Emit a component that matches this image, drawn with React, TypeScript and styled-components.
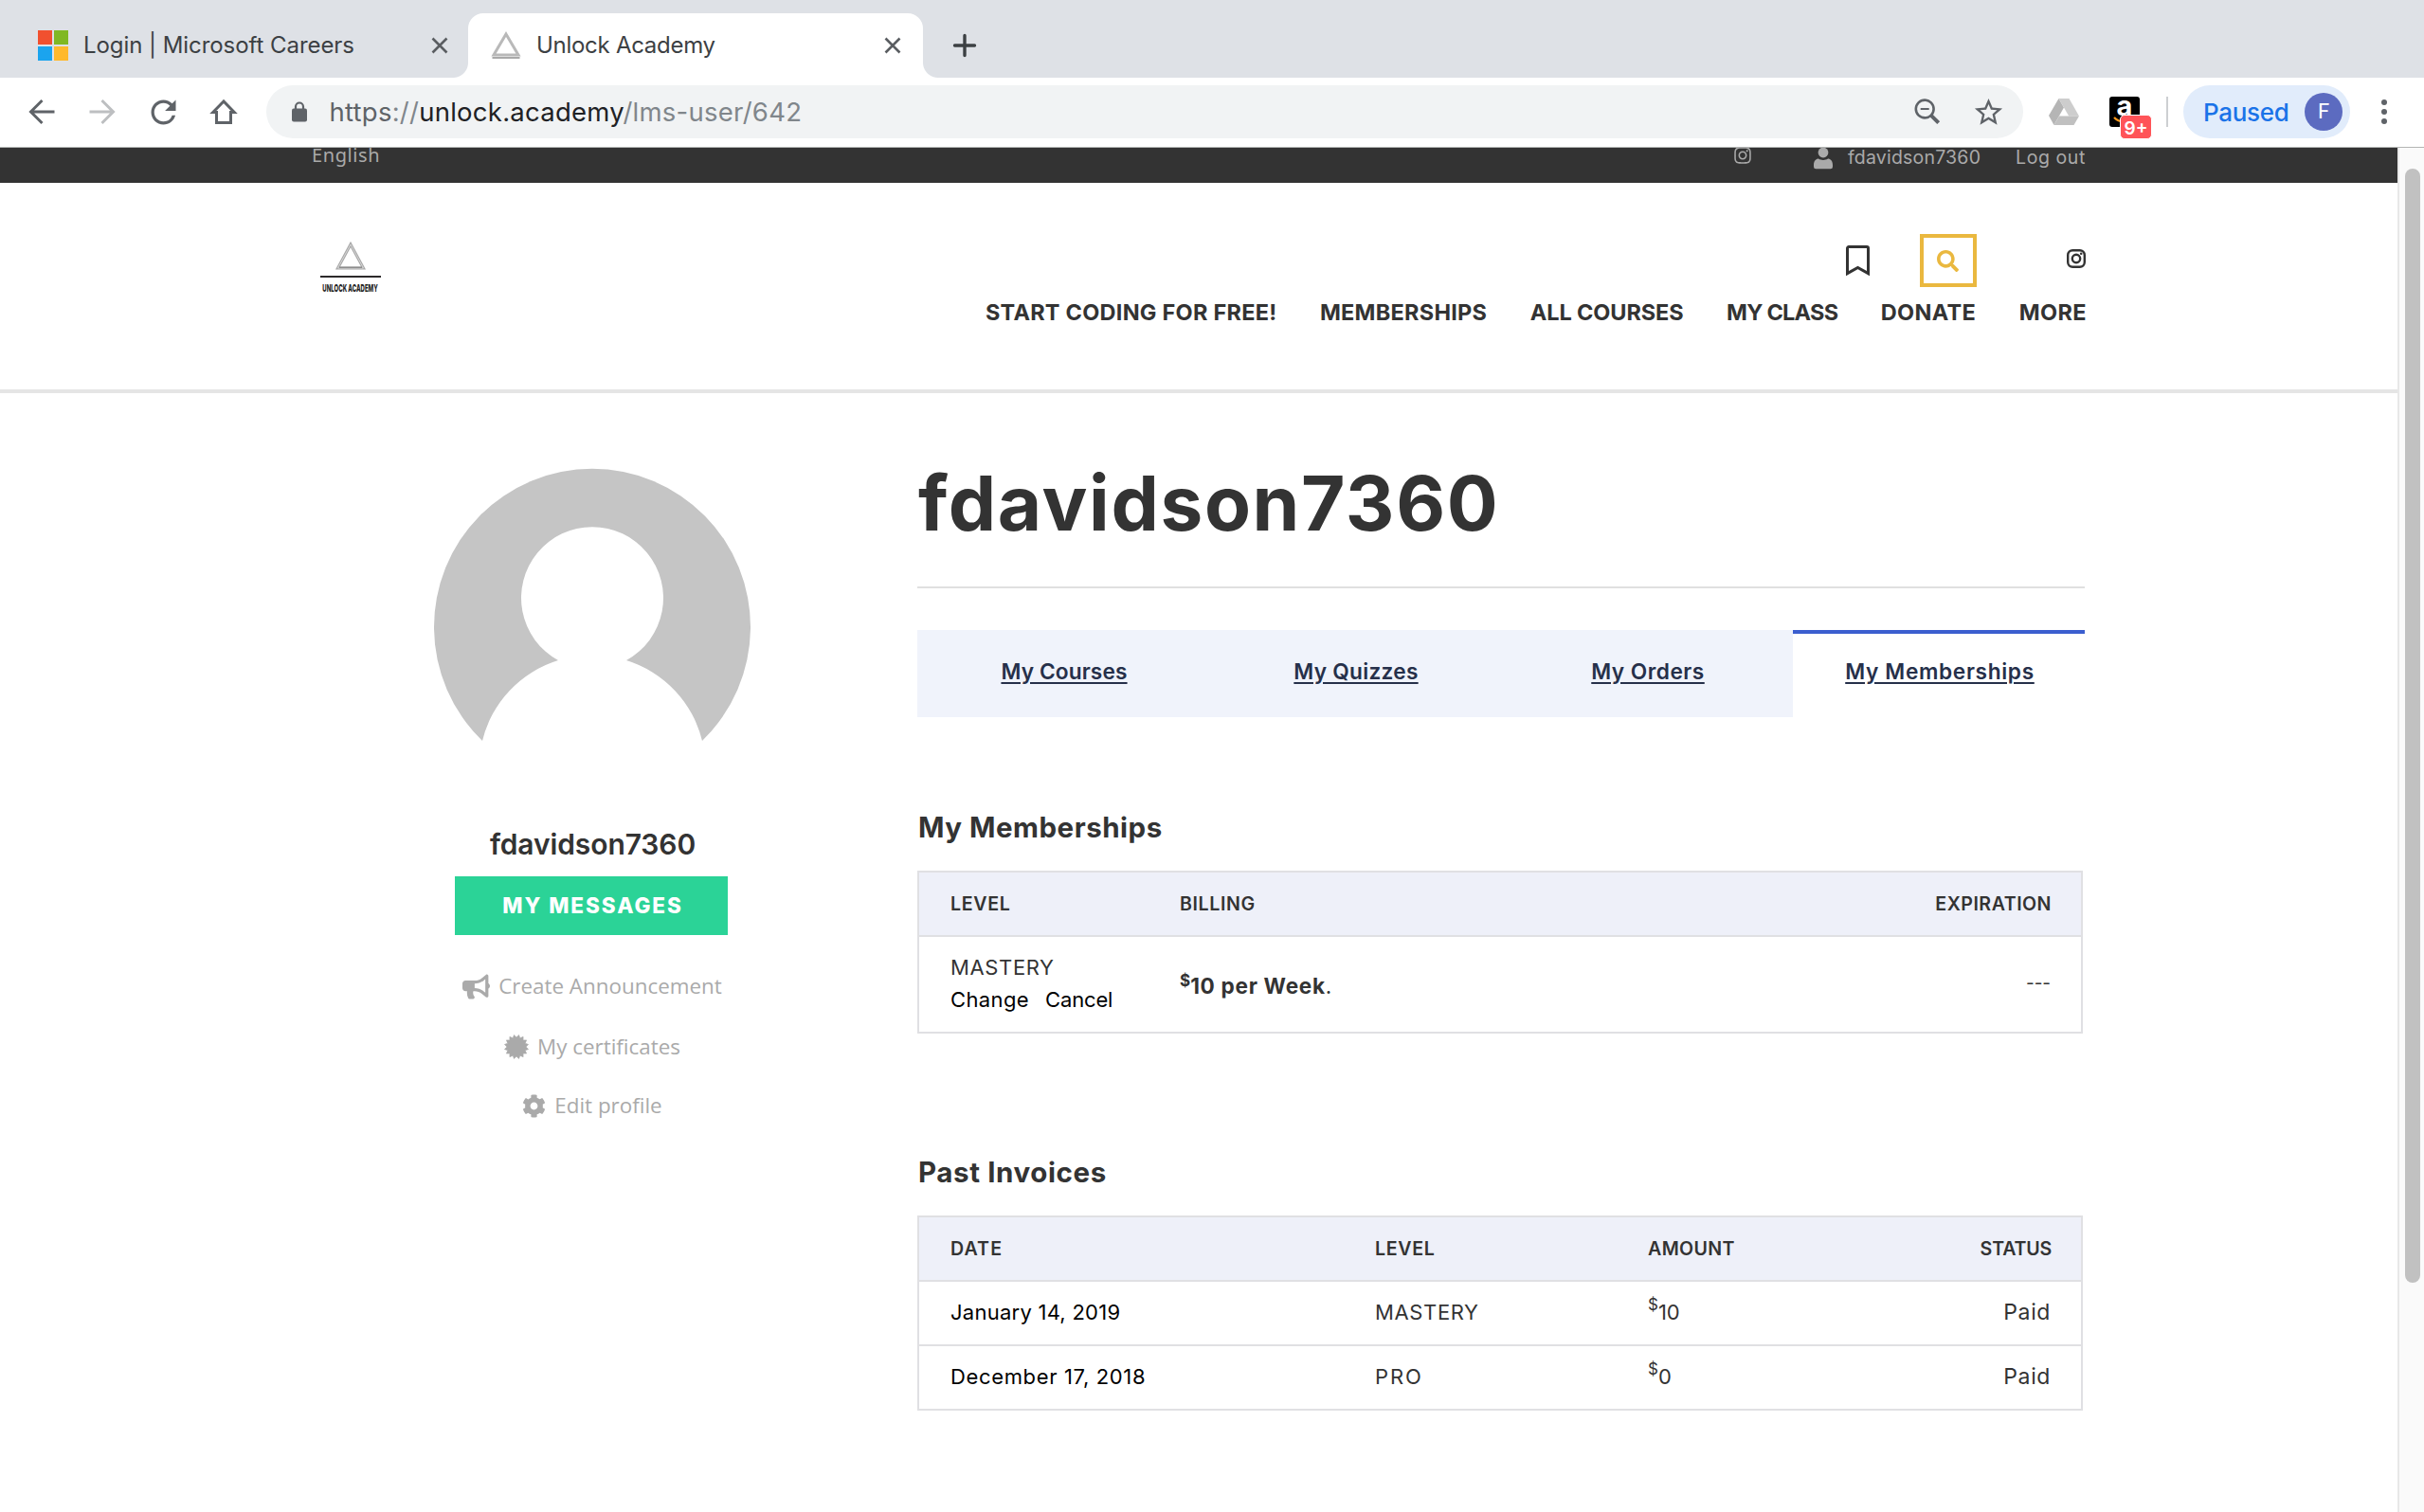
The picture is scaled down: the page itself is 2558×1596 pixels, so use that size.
import React from 'react';
import styled, { createGlobalStyle, css } from 'styled-components';
import { FaBullhorn, FaCog, FaInstagram, FaSearch } from 'react-icons/fa';
import { MdRefresh, MdStarBorder } from 'react-icons/md';

const GlobalStyle = createGlobalStyle`
  * { box-sizing: border-box; }
  html, body { margin: 0; padding: 0; background: #fff; overflow: hidden; }
  body { font-family: Inter, 'Liberation Sans', sans-serif; color: #333; }
  svg { display: block; flex: none; overflow: visible; }
`;

const Window = styled.div`
  width: 2558px;
  height: 1596px;
  display: flex;
  flex-direction: column;
  overflow: hidden;
`;

/* Browser tab strip */

const TabStrip = styled.div`
  height: 82px;
  padding-top: 14px;
  display: flex;
  background: #dee1e6;
`;

const flare = css`
  content: '';
  position: absolute;
  bottom: 0;
  width: 16px;
  height: 16px;
`;

const BrowserTab = styled.div<{ $active?: boolean }>`
  position: relative;
  width: ${(p) => (p.$active ? 480 : 494)}px;
  padding: ${(p) => (p.$active ? '0 23px 0 25px' : '0 21px 0 40px')};
  display: flex;
  align-items: center;
  ${(p) =>
    p.$active &&
    css`
      background: #fff;
      border-radius: 16px 16px 0 0;
      &::before {
        ${flare}
        left: -16px;
        background: radial-gradient(circle at 0 0, #dee1e6 15.5px, #fff 16.5px);
      }
      &::after {
        ${flare}
        right: -16px;
        background: radial-gradient(circle at 100% 0, #dee1e6 15.5px, #fff 16.5px);
      }
    `}
`;

const TabTitle = styled.span<{ $gap: number; $ls: number }>`
  flex: 1;
  margin-left: ${(p) => p.$gap}px;
  padding-bottom: 2px;
  font-size: 24px;
  letter-spacing: ${(p) => p.$ls}px;
  color: #3c4043;
  white-space: nowrap;
`;

const WindowsLogo = styled.div`
  display: grid;
  grid-template-columns: 15px 15px;
  grid-template-rows: 15px 15px;
  gap: 2px;
`;

const LogoTile = styled.div<{ $color: string }>`
  background: ${(p) => p.$color};
`;

const NewTab = styled.div`
  margin-left: 32px;
  display: flex;
  align-items: center;
`;

/* Browser toolbar */

const Toolbar = styled.div`
  height: 74px;
  padding: 0 0 1px 28px;
  display: flex;
  align-items: center;
  background: #fff;
  border-bottom: 1px solid #b3b5b4;
`;

const ToolIcon = styled.div<{ $gap?: number }>`
  width: 32px;
  height: 32px;
  margin-left: ${(p) => p.$gap ?? 0}px;
  display: flex;
  align-items: center;
  justify-content: center;
  flex: none;
  color: #5f6368;
`;

const AddressBar = styled.div`
  width: 1854px;
  height: 56px;
  margin-left: 29px;
  padding: 0 21px 0 27px;
  display: flex;
  align-items: center;
  border-radius: 28px;
  background: #f1f3f4;
`;

const Url = styled.div`
  flex: 1;
  margin-left: 23.5px;
  font-size: 27.5px;
  letter-spacing: 0.25px;
  color: #80868b;
`;

const UrlScheme = styled.span`
  color: #5f6368;
`;

const UrlHost = styled.span`
  color: #202124;
`;

const AmazonButton = styled.div`
  position: relative;
  width: 32px;
  height: 32px;
  margin-left: 32px;
  border-radius: 3px;
  background: #000;
  color: #fff;
  font-size: 29px;
  font-weight: 700;
  line-height: 20px;
  text-align: center;
`;

const AmazonSmile = styled.svg`
  position: absolute;
  left: 4px;
  top: 21px;
`;

const CountBadge = styled.span`
  position: absolute;
  left: 11px;
  top: 19px;
  width: 34px;
  height: 26px;
  border: 1px solid #fff;
  border-radius: 5px;
  background: #ff5458;
  font-size: 19px;
  font-weight: 600;
  line-height: 27px;
  color: #fff;
`;

const ToolDivider = styled.div`
  width: 2px;
  height: 32px;
  margin-left: 28px;
  background: #cdcfd2;
`;

const ProfilePill = styled.div`
  width: 176px;
  height: 56px;
  margin-left: 16px;
  padding: 0 8px 0 21px;
  display: flex;
  align-items: center;
  justify-content: space-between;
  border-radius: 28px;
  background: #e1ecfb;
  font: 500 26px Inter, sans-serif;
  letter-spacing: -0.3px;
  color: #1a73e8;
`;

const ProfileBadge = styled.div`
  width: 40px;
  height: 40px;
  border-radius: 50%;
  background: #5c6bc0;
  color: #fff;
  font: 400 22px/40px Roboto, sans-serif;
  text-align: center;
`;

/* Page frame */

const Viewport = styled.div`
  flex: 1;
  display: flex;
  min-height: 0;
`;

const Page = styled.div`
  width: 2530px;
  background: #fff;
`;

const ScrollTrack = styled.div`
  width: 28px;
  padding: 22px 4px 0 6px;
  background: #fafafa;
  border-left: 2px solid #e8e8e8;
`;

const ScrollThumb = styled.div`
  width: 16px;
  height: 1176px;
  border-radius: 8px;
  background: #c1c1c1;
`;

/* Site top bar */

const TopBar = styled.div`
  height: 37px;
  padding: 0 330px 0 329px;
  display: flex;
  align-items: flex-start;
  background: #333;
  color: #aaa;
`;

const Language = styled.span`
  margin-right: auto;
  font: 400 20px/16px 'Noto Sans', sans-serif;
  letter-spacing: 0.6px;
`;

const TopBarIcon = styled.span<{ $shift: number; $after: number }>`
  margin: ${(p) => p.$shift}px ${(p) => p.$after}px 0 0;
`;

const TopBarLink = styled.span<{ $width: number; $ls: number }>`
  width: ${(p) => p.$width}px;
  font-size: 19.5px;
  line-height: 21px;
  letter-spacing: ${(p) => p.$ls}px;
  white-space: nowrap;
`;

/* Site header */

const Header = styled.header`
  height: 222px;
  padding: 0 328px 0 338px;
  display: flex;
  justify-content: space-between;
  border-bottom: 4px solid #e5e5e5;
`;

const Brand = styled.div`
  width: 64px;
  padding-top: 62px;
  display: flex;
  flex-direction: column;
  align-items: center;
`;

const BrandRule = styled.div`
  width: 64px;
  height: 2px;
  margin-top: 6px;
  background: #2d2a2b;
`;

const BrandName = styled.div`
  margin-top: 4px;
  font-size: 11px;
  font-weight: 800;
  line-height: 14px;
  color: #222;
  white-space: nowrap;
  transform: scaleX(0.545);
`;

const HeaderSide = styled.div`
  padding-top: 54px;
  display: flex;
  flex-direction: column;
  align-items: flex-end;
`;

const HeaderTools = styled.div`
  padding-right: 1px;
  display: flex;
  align-items: center;
`;

const SearchBox = styled.div`
  width: 60px;
  height: 56px;
  margin: 0 95px 0 53px;
  padding-right: 1px;
  display: flex;
  align-items: center;
  justify-content: center;
  border: 4px solid #eab83f;
  color: #eab83f;
`;

const HeaderSocial = styled.div`
  margin-bottom: 5px;
`;

const Nav = styled.nav`
  margin-top: 14px;
  display: flex;
  gap: 45.5px;
`;

const NavLink = styled.span<{ $ls: number }>`
  font-size: 23.5px;
  font-weight: 700;
  line-height: 25px;
  letter-spacing: ${(p) => p.$ls}px;
  white-space: nowrap;
`;

/* Profile body */

const Body = styled.main`
  padding: 0 330px;
  display: grid;
  grid-template-columns: 590px 1232px;
  column-gap: 48px;
`;

const Sidebar = styled.aside`
  padding-top: 80px;
  display: flex;
  flex-direction: column;
  align-items: center;
`;

const UserName = styled.div`
  margin: 44px 0 0 1px;
  font-size: 30px;
  font-weight: 600;
  line-height: 36px;
  letter-spacing: -0.1px;
`;

const MessagesButton = styled.div`
  width: 288px;
  height: 62px;
  margin: 16px 2px 6px 0;
  padding: 0 0 2px 3px;
  display: flex;
  align-items: center;
  justify-content: center;
  background: #2bd397;
  color: #fff;
  font-size: 22.5px;
  font-weight: 800;
  letter-spacing: 1.95px;
`;

const ProfileLink = styled.div<{ $above: number }>`
  margin-top: ${(p) => p.$above}px;
  display: flex;
  align-items: center;
  gap: 9px;
  color: #aaa;
  font: 400 22.4px/34px 'Open Sans', sans-serif;
`;

const Content = styled.section`
  display: flex;
  flex-direction: column;
`;

const Title = styled.h1`
  margin: 66px 0 38px 1px;
  font-size: 80px;
  font-weight: 700;
  line-height: 100px;
  letter-spacing: 1.63px;
`;

const Rule = styled.div`
  height: 2px;
  background: #e0e0e0;
`;

const Tabs = styled.div`
  height: 92px;
  margin: 44px 0 98px;
  display: grid;
  grid-template-columns: repeat(4, 1fr);
`;

const Tab = styled.div<{ $active?: boolean; $ls: number }>`
  padding: 25px 0 0 2px;
  border-top: 4px solid ${(p) => (p.$active ? '#3b5ecf' : '#f0f3fb')};
  background: ${(p) => (p.$active ? '#fff' : '#f0f3fb')};
  color: #26304a;
  font-size: 22.7px;
  font-weight: 600;
  line-height: 29px;
  letter-spacing: ${(p) => p.$ls}px;
  text-align: center;
  text-decoration: underline;
  text-decoration-thickness: 2px;
  text-underline-offset: 3px;
`;

const SectionTitle = styled.h3<{ $ls: number }>`
  margin: 0 0 28px 1px;
  font-size: 29.5px;
  font-weight: 700;
  line-height: 36px;
  letter-spacing: ${(p) => p.$ls}px;
`;

const Table = styled.div<{ $columns: string }>`
  width: 1230px;
  margin-bottom: 128px;
  display: grid;
  border: 2px solid #e0e0e3;

  & > div {
    grid-template-columns: ${(p) => p.$columns};
  }
`;

const HeadRow = styled.div`
  height: 66px;
  padding: 0 31px 0 33px;
  display: grid;
  align-items: center;
  background: #eef0f9;
`;

const Row = styled.div<{ $height: number }>`
  height: ${(p) => p.$height + 2}px;
  padding: 0 32px 2px 33px;
  display: grid;
  align-items: center;
  border-top: 2px solid #e0e0e3;
  font-size: 22px;
  line-height: 34px;
`;

const HeadCell = styled.div<{ $ls: number; $right?: boolean }>`
  font-size: 19.6px;
  font-weight: 600;
  letter-spacing: ${(p) => p.$ls}px;
  text-align: ${(p) => (p.$right ? 'right' : 'left')};
`;

const Cell = styled.div<{ $ls?: number; $right?: boolean }>`
  letter-spacing: ${(p) => p.$ls ?? 0}px;
  text-align: ${(p) => (p.$right ? 'right' : 'left')};
`;

const DarkCell = styled(Cell)`
  color: #000;
`;

const Actions = styled.div`
  display: flex;
  gap: 17px;
  color: #000;
`;

const Action = styled.span<{ $ls: number }>`
  letter-spacing: ${(p) => p.$ls}px;
`;

const Price = styled(Cell)`
  padding-top: 5px;
  font-size: 22.6px;
  letter-spacing: 0.7px;
`;

const NoExpiry = styled(Cell)`
  font-size: 19px;
  letter-spacing: -0.1px;
`;

const Status = styled(Cell)`
  font-size: 23px;
  letter-spacing: 0.6px;
  text-align: right;
`;

const Dollar = styled.sup<{ $raise: number }>`
  font-size: 17px;
  line-height: 0;
  letter-spacing: 0;
  vertical-align: ${(p) => p.$raise}px;
`;

const CloseIcon = () => (
  <svg width="18" height="18" viewBox="0 0 18 18" stroke="#5a5d61" strokeWidth="2.6">
    <path d="M1.5 1.5L16.5 16.5M16.5 1.5L1.5 16.5" />
  </svg>
);

const toolStroke = { width: 32, height: 32, viewBox: '0 0 32 32', fill: 'none', strokeWidth: 3 };

/* Zigzag outline of the certificate seal: 16 points around a 26px circle */
const burst = Array.from({ length: 32 }, (_, i) => {
  const r = i % 2 ? 12.8 : 10;
  const a = (i * Math.PI) / 16;
  return `${(13 + r * Math.sin(a)).toFixed(2)},${(13 - r * Math.cos(a)).toFixed(2)}`;
}).join(' ');

const navItems: [string, number][] = [
  ['START CODING FOR FREE!', 0.25],
  ['MEMBERSHIPS', 0.26],
  ['ALL COURSES', -0.1],
  ['MY CLASS', -0.75],
  ['DONATE', 0.33],
  ['MORE', 0.4],
];

const tabs: [string, number][] = [
  ['My Courses', 0.12],
  ['My Quizzes', 0.26],
  ['My Orders', 0.48],
  ['My Memberships', 0.65],
];

const invoices = [
  { date: 'January 14, 2019', dateLs: 0.25, level: 'MASTERY', levelLs: 0.63, amount: '10' },
  { date: 'December 17, 2018', dateLs: 0.65, level: 'PRO', levelLs: 1.9, amount: '0' },
];

function BrowserChrome() {
  return (
    <>
      <TabStrip>
        <BrowserTab>
          <WindowsLogo>
            <LogoTile $color="#f1502f" />
            <LogoTile $color="#80b823" />
            <LogoTile $color="#1ba4ee" />
            <LogoTile $color="#ffb92c" />
          </WindowsLogo>
          <TabTitle $gap={16} $ls={-0.06}>Login | Microsoft Careers</TabTitle>
          <CloseIcon />
        </BrowserTab>
        <BrowserTab $active>
          <svg width="30" height="28" viewBox="0 0 30 28" fill="none">
            <path d="M15 2L28 24H2Z" stroke="#b9b9b9" strokeWidth="3" />
            <path d="M0.5 27H29.5" stroke="#a9a9a9" strokeWidth="2" />
          </svg>
          <TabTitle $gap={17} $ls={-0.28}>Unlock Academy</TabTitle>
          <CloseIcon />
        </BrowserTab>
        <NewTab>
          <svg width="24" height="24" viewBox="0 0 24 24" stroke="#3c4043" strokeWidth="3.4" strokeLinecap="round">
            <path d="M12 1.5V22.5M1.5 12H22.5" />
          </svg>
        </NewTab>
      </TabStrip>
      <Toolbar>
        <ToolIcon>
          <svg {...toolStroke} stroke="#5f6368">
            <path d="M16.5 4L4.5 16L16.5 28M5 16H29.5" />
          </svg>
        </ToolIcon>
        <ToolIcon $gap={32}>
          <svg {...toolStroke} stroke="#bdbfc1">
            <path d="M15.5 4L27.5 16L15.5 28M27 16H2.5" />
          </svg>
        </ToolIcon>
        <ToolIcon $gap={32}>
          <MdRefresh size={39} />
        </ToolIcon>
        <ToolIcon $gap={32}>
          <svg {...toolStroke} stroke="#5f6368">
            <path d="M16 5L4.8 16.5H8.5V27.5H23.5V16.5H27.2Z" />
          </svg>
        </ToolIcon>
        <AddressBar>
          <svg width="16" height="22" viewBox="0 0 16 22">
            <path d="M4 9V5.5a4 4 0 0 1 8 0V9" fill="none" stroke="#5f6368" strokeWidth="2.2" />
            <rect y="7.5" width="16" height="14" rx="2" fill="#5f6368" />
          </svg>
          <Url>
            <UrlScheme>https</UrlScheme>://<UrlHost>unlock.academy</UrlHost>/lms-user/642
          </Url>
          <ToolIcon>
            <svg {...toolStroke} stroke="#5f6368">
              <circle cx="14.2" cy="13" r="9.4" strokeWidth="2.6" />
              <path d="M9.7 13H18.7" strokeWidth="2" />
              <path d="M20.9 19.8L28.7 27.6" strokeWidth="4" />
            </svg>
          </ToolIcon>
          <ToolIcon $gap={33}>
            <MdStarBorder size={35} />
          </ToolIcon>
        </AddressBar>
        <ToolIcon $gap={27}>
          <svg width="32" height="28" viewBox="0 0 32 28">
            <path d="M10.5 0L16 9.5L5.5 28L0 18Z" fill="#b5b5b5" />
            <path d="M10.5 0H21.5L32 18.5H21.2Z" fill="#cdcdcd" />
            <path d="M11 18.5H32L26.5 28H5.5Z" fill="#c0c0c0" />
          </svg>
        </ToolIcon>
        <AmazonButton>
          a
          <AmazonSmile width="22" height="8" viewBox="0 0 22 8" fill="none">
            <path d="M1 1Q9 9 20 2" stroke="#f7981d" strokeWidth="2.4" />
          </AmazonSmile>
          <CountBadge>9+</CountBadge>
        </AmazonButton>
        <ToolDivider />
        <ProfilePill>
          Paused
          <ProfileBadge>F</ProfileBadge>
        </ProfilePill>
        <ToolIcon $gap={20}>
          <svg width="8" height="28" viewBox="0 0 8 28" fill="#5f6368">
            <circle cx="4" cy="4" r="3" />
            <circle cx="4" cy="14" r="3" />
            <circle cx="4" cy="24" r="3" />
          </svg>
        </ToolIcon>
      </Toolbar>
    </>
  );
}

function SiteHeader() {
  return (
    <>
      <TopBar>
        <Language>English</Language>
        <TopBarIcon $shift={-2} $after={65}>
          <FaInstagram size={20} />
        </TopBarIcon>
        <TopBarIcon $shift={0} $after={16}>
          <svg width="20" height="22" viewBox="0 0 20 22" fill="#aaa">
            <circle cx="10" cy="5" r="5.4" />
            <path d="M0 20V18c0-4 2.500-6.400 5-6.400 1.500 1 3 1.400 5 1.400S13.500 12.600 15 11.600c2.500 0 5 2.400 5 6.400v2a2.200 2.200 0 0 1-2.200 2.200H2.200A2.200 2.200 0 0 1 0 20Z" />
          </svg>
        </TopBarIcon>
        <TopBarLink $width={177} $ls={0.2}>fdavidson7360</TopBarLink>
        <TopBarLink $width={73} $ls={0.6}>Log out</TopBarLink>
      </TopBar>
      <Header>
        <Brand>
          <svg width="32" height="30" viewBox="0 0 32 30" fill="none">
            <path d="M16 3L29.500 28H2.500Z" stroke="#a8a8a8" strokeWidth="3" />
            <path d="M16 3L29.500 28H2.500Z" stroke="#d6d6d6" strokeWidth="1" />
            <path d="M4 27.200H28" stroke="#777" strokeWidth="1" />
          </svg>
          <BrandRule />
          <BrandName>UNLOCK ACADEMY</BrandName>
        </Brand>
        <HeaderSide>
          <HeaderTools>
            <svg width="25" height="32" viewBox="0 0 25 32" fill="none" stroke="#333" strokeWidth="3">
              <path d="M1.500 29.600V3a1.500 1.500 0 0 1 1.500-1.500H22A1.500 1.500 0 0 1 23.500 3V29.600L12.500 23.500Z" />
            </svg>
            <SearchBox>
              <FaSearch size={23} />
            </SearchBox>
            <HeaderSocial>
              <svg width="20" height="20" viewBox="0 0 20 20" fill="none" stroke="#333">
                <rect x="1.200" y="1.200" width="17.600" height="17.600" rx="5" strokeWidth="2.400" />
                <circle cx="10" cy="10" r="4.200" strokeWidth="2.400" />
                <circle cx="15.200" cy="4.800" r="1.300" fill="#333" stroke="none" />
              </svg>
            </HeaderSocial>
          </HeaderTools>
          <Nav>
            {navItems.map(([label, ls]) => (
              <NavLink key={label} $ls={ls}>{label}</NavLink>
            ))}
          </Nav>
        </HeaderSide>
      </Header>
    </>
  );
}

function ProfileSidebar() {
  return (
    <Sidebar>
      <svg width="334" height="334" viewBox="0 0 334 334">
        <path
          fill="#c5c5c5"
          d="M51 287A167 167 0 1 1 283 287A118.300 118.300 0 0 0 203 202A75 75 0 1 0 131 202A118.300 118.300 0 0 0 51 287Z"
        />
      </svg>
      <UserName>fdavidson7360</UserName>
      <MessagesButton>MY MESSAGES</MessagesButton>
      <ProfileLink $above={31}>
        <FaBullhorn size={29} />
        Create Announcement
      </ProfileLink>
      <ProfileLink $above={30}>
        <svg width="26" height="26" viewBox="0 0 26 26">
          <polygon points={burst} fill="#aaa" stroke="#aaa" strokeWidth="0.6" strokeLinejoin="round" />
        </svg>
        My certificates
      </ProfileLink>
      <ProfileLink $above={28}>
        <FaCog size={25} />
        Edit profile
      </ProfileLink>
    </Sidebar>
  );
}

function ProfileContent() {
  return (
    <Content>
      <Title>fdavidson7360</Title>
      <Rule />
      <Tabs>
        {tabs.map(([label, ls], i) => (
          <Tab key={label} $ls={ls} $active={i === 3}>{label}</Tab>
        ))}
      </Tabs>

      <SectionTitle $ls={0.5}>My Memberships</SectionTitle>
      <Table $columns="242px 1fr 200px">
        <HeadRow>
          <HeadCell $ls={0.65}>LEVEL</HeadCell>
          <HeadCell $ls={0.62}>BILLING</HeadCell>
          <HeadCell $ls={0.5} $right>EXPIRATION</HeadCell>
        </HeadRow>
        <Row $height={100}>
          <div>
            <Cell $ls={0.63}>MASTERY</Cell>
            <Actions>
              <Action $ls={0.38}>Change</Action>
              <Action $ls={-0.16}>Cancel</Action>
            </Actions>
          </div>
          <Price>
            <b><Dollar $raise={8}>$</Dollar>10 per Week</b>.
          </Price>
          <NoExpiry $right>---</NoExpiry>
        </Row>
      </Table>

      <SectionTitle $ls={0.6}>Past Invoices</SectionTitle>
      <Table $columns="448px 288px 1fr 200px">
        <HeadRow>
          <HeadCell $ls={1.1}>DATE</HeadCell>
          <HeadCell $ls={0.65}>LEVEL</HeadCell>
          <HeadCell $ls={0.37}>AMOUNT</HeadCell>
          <HeadCell $ls={-0.2} $right>STATUS</HeadCell>
        </HeadRow>
        {invoices.map((row) => (
          <Row key={row.date} $height={66}>
            <DarkCell $ls={row.dateLs}>{row.date}</DarkCell>
            <Cell $ls={row.levelLs}>{row.level}</Cell>
            <Cell><Dollar $raise={10}>$</Dollar>{row.amount}</Cell>
            <Status>Paid</Status>
          </Row>
        ))}
      </Table>
    </Content>
  );
}

export default function App() {
  return (
    <Window>
      <GlobalStyle />
      <BrowserChrome />
      <Viewport>
        <Page>
          <SiteHeader />
          <Body>
            <ProfileSidebar />
            <ProfileContent />
          </Body>
        </Page>
        <ScrollTrack>
          <ScrollThumb />
        </ScrollTrack>
      </Viewport>
    </Window>
  );
}
